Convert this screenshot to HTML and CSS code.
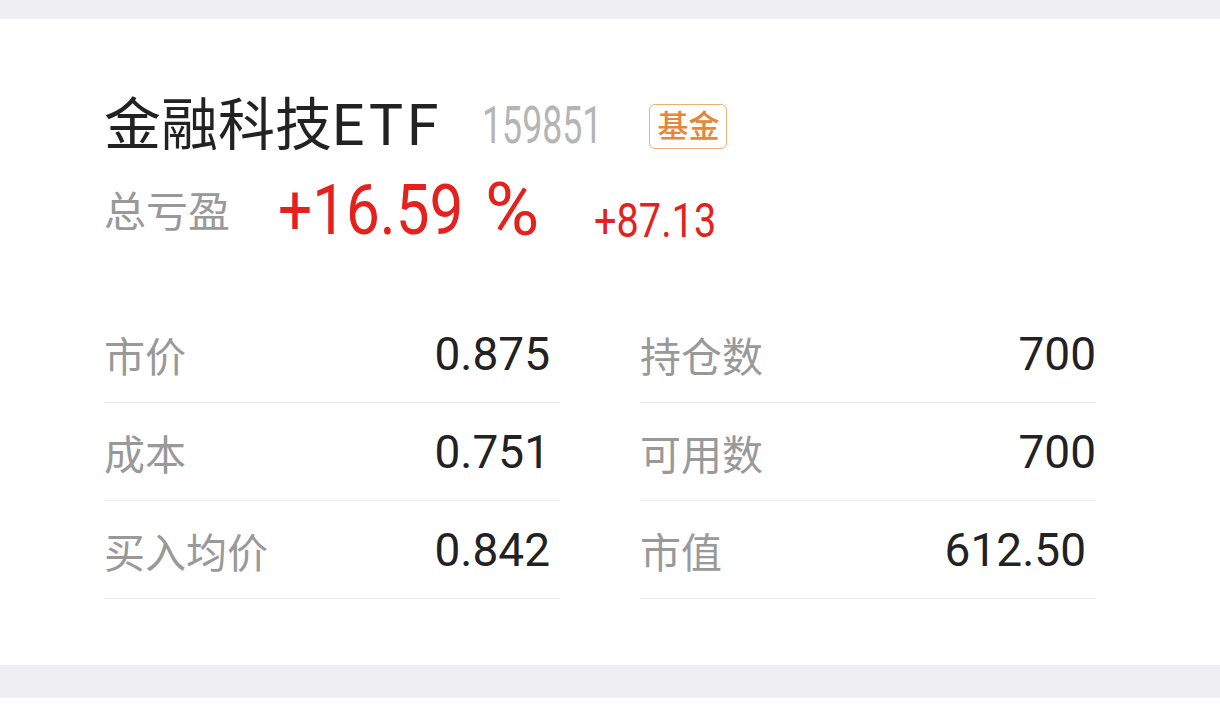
FILE: index.html
```html
<!DOCTYPE html>
<html lang="zh-CN">
<head>
    <meta charset="UTF-8">
    <meta name="viewport" content="width=device-width, initial-scale=1.0">
    <title>持仓详情</title>
    <link rel="stylesheet" href="styles.css">
</head>
<body>
    <div class="card">
        <div class="title-row">
            <h1 class="fund-name">金融科技<span class="fund-suffix">ETF</span></h1>
            <span class="fund-code">159851</span>
            <span class="tag">基金</span>
        </div>
        <div class="profit-row">
            <span class="profit-label">总亏盈</span>
            <span class="profit-rate">
                <span class="rate-num">+16.59</span><span class="rate-unit">%</span>
            </span>
            <span class="profit-amount">+87.13</span>
        </div>
        <div class="stats">
            <div class="stat-col stat-col-left">
                <div class="stat-row">
                    <span class="stat-label">市价</span>
                    <span class="stat-value">0.875</span>
                </div>
                <div class="stat-row">
                    <span class="stat-label">成本</span>
                    <span class="stat-value">0.751</span>
                </div>
                <div class="stat-row">
                    <span class="stat-label">买入均价</span>
                    <span class="stat-value">0.842</span>
                </div>
            </div>
            <div class="stat-col">
                <div class="stat-row">
                    <span class="stat-label">持仓数</span>
                    <span class="stat-value">700</span>
                </div>
                <div class="stat-row">
                    <span class="stat-label">可用数</span>
                    <span class="stat-value">700</span>
                </div>
                <div class="stat-row">
                    <span class="stat-label">市值</span>
                    <span class="stat-value stat-value-inset">612.50</span>
                </div>
            </div>
        </div>
    </div>
    <div class="card-next"></div>
</body>
</html>
```

FILE: styles.css
```css
/* Page */
body {
    margin: 0;
    padding-top: 19px;
    background-color: #efeef3;
    font-family: Roboto, "Noto Sans CJK SC", sans-serif;
    color: #222;
}

/* Position card */
.card {
    background-color: #fff;
    padding: 77px 124px 66px 104px;
}

.title-row {
    display: flex;
    align-items: center;
    height: 60px;
}

.fund-name {
    margin: 0;
    font-size: 57px;
    font-weight: normal;
    line-height: 60px;
    color: #222;
    white-space: nowrap;
}

.fund-suffix {
    letter-spacing: 4px;
}

/* the numbers in the header use a narrow face, so squeeze them */
.fund-code,
.rate-num,
.profit-amount {
    display: inline-block;
    white-space: nowrap;
    transform-origin: left center;
}

.fund-code {
    width: 120px;
    margin-left: 40px;
    font-size: 51px;
    line-height: 60px;
    color: #b5b5b5;
    transform: scaleX(0.7);
}

.tag {
    margin-left: 47px;
    padding: 2px 7px;
    border: 1.5px solid #efae74;
    border-radius: 6px;
    font-size: 31px;
    font-weight: 500;
    line-height: 39px;
    color: #e3883a;
}

.profit-row {
    display: flex;
    align-items: center;
    height: 70px;
    margin-top: 22px;
}

.profit-label {
    font-size: 42px;
    line-height: 48px;
    color: #999;
}

.profit-rate {
    display: flex;
    align-items: center;
    margin-left: 48px;
    margin-bottom: 7px;
    font-size: 70px;
    line-height: 70px;
    color: #e5211d;
}

.rate-num {
    width: 185px;
    transform: scaleX(0.86);
}

.rate-unit {
    margin-left: 22px;
    font-size: 74px;
}

.profit-amount {
    width: 122px;
    margin-left: 55px;
    margin-top: 15px;
    font-size: 49px;
    line-height: 50px;
    color: #e5211d;
    transform: scaleX(0.81);
}

/* Stats grid */
.stats {
    display: grid;
    grid-template-columns: 456px 456px;
    column-gap: 80px;
    margin-top: 57px;
}

.stat-row {
    display: flex;
    align-items: center;
    justify-content: space-between;
    height: 97px;
    border-bottom: 1px solid #ededed;
}

.stat-label {
    font-size: 41px;
    color: #999;
}

.stat-value {
    font-size: 46px;
    color: #222;
}

.stat-col-left .stat-value {
    padding-right: 10px;
}

.stat-value-inset {
    padding-right: 10px;
}

.card-next {
    height: 16px;
    margin-top: 33px;
    background-color: #fff;
}
```
